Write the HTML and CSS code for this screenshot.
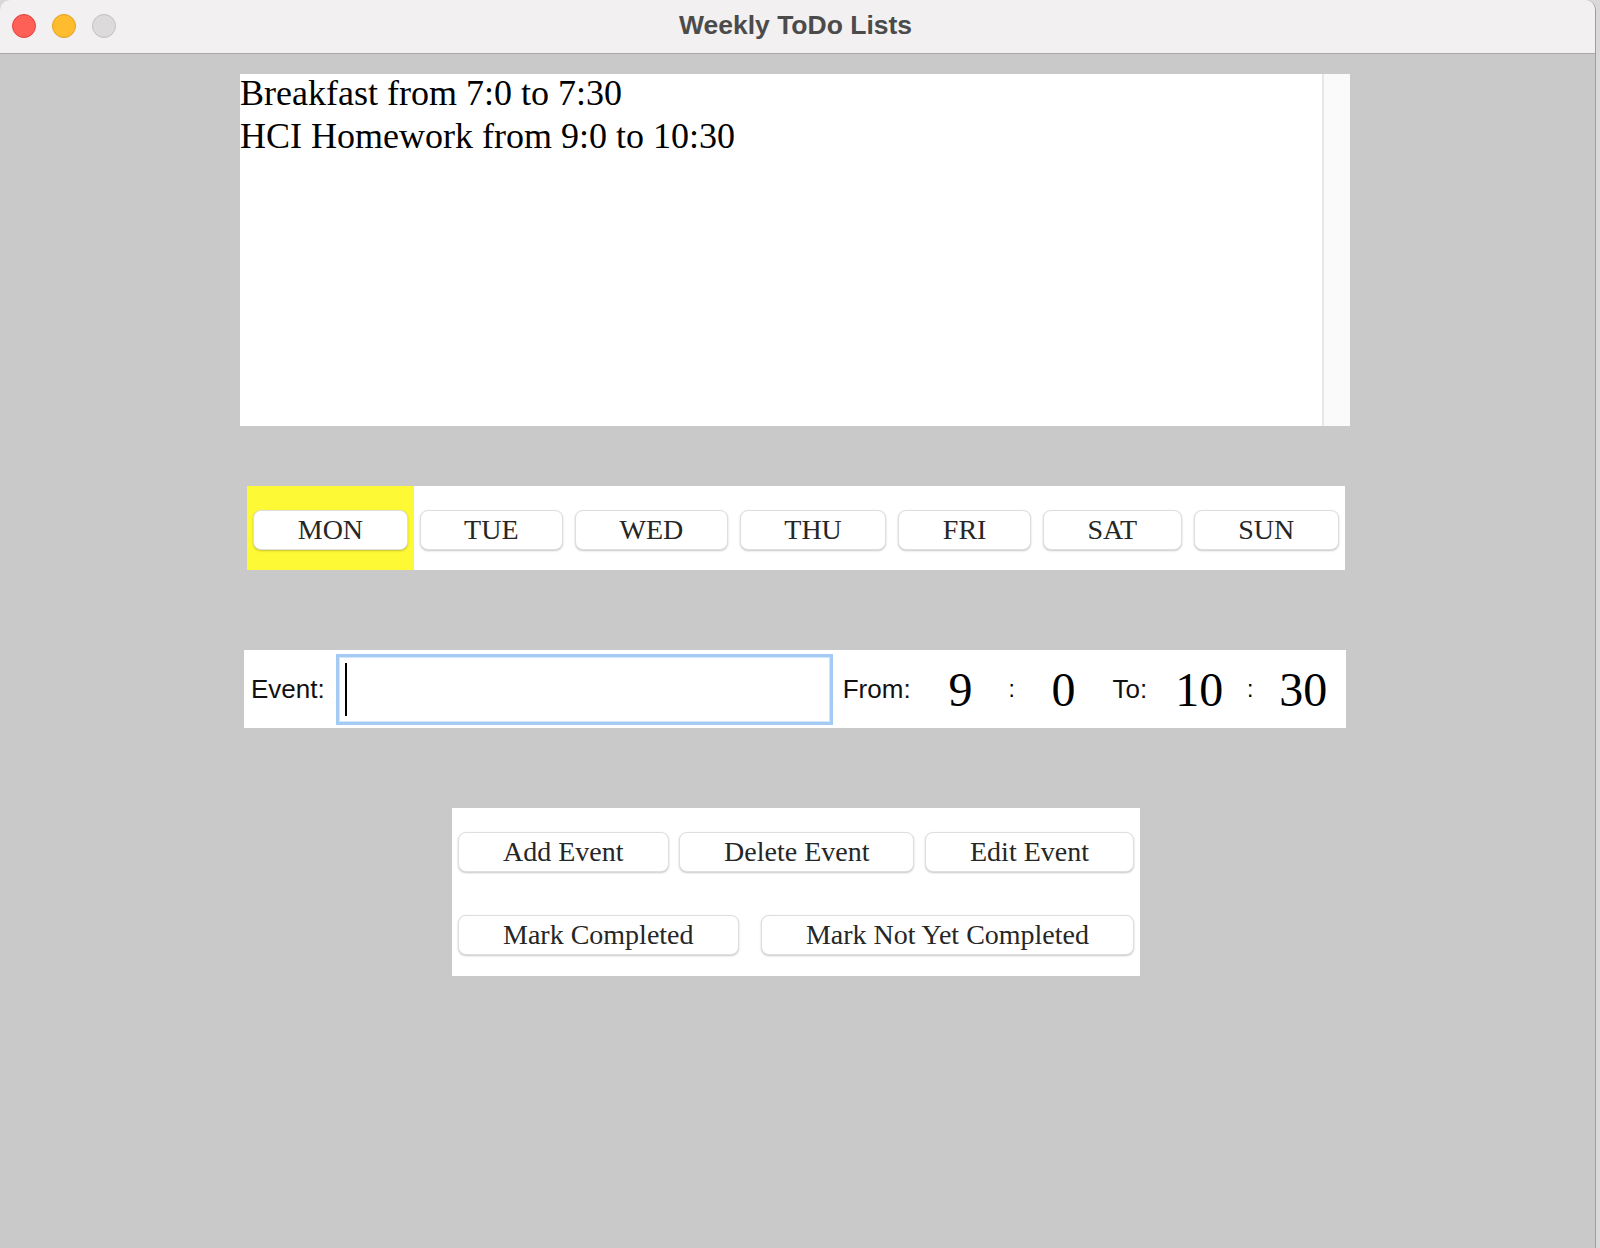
FILE: index.html
```html
<!DOCTYPE html>
<html>
<head>
<meta charset="utf-8">
<title>Weekly ToDo Lists</title>
<link rel="stylesheet" href="styles.css">
</head>
<body>
<div class="window">
  <div class="titlebar">
    <div class="lights">
      <span class="light red"></span>
      <span class="light yellow"></span>
      <span class="light grey"></span>
    </div>
    <div class="title">Weekly ToDo Lists</div>
  </div>
  <div class="content">
    <div class="listbox">
      <div class="list-text">
        <div class="list-line">Breakfast from 7:0 to 7:30</div>
        <div class="list-line">HCI Homework from 9:0 to 10:30</div>
      </div>
      <div class="vscroll"></div>
    </div>

    <div class="days">
      <div class="day-cell active"><div class="btn">MON</div></div>
      <div class="day-cell"><div class="btn">TUE</div></div>
      <div class="day-cell"><div class="btn">WED</div></div>
      <div class="day-cell"><div class="btn">THU</div></div>
      <div class="day-cell"><div class="btn">FRI</div></div>
      <div class="day-cell"><div class="btn">SAT</div></div>
      <div class="day-cell"><div class="btn">SUN</div></div>
    </div>

    <div class="event-row">
      <span class="label event-label">Event:</span>
      <div class="event-input"><span class="caret"></span></div>
      <span class="label from-label">From:</span>
      <span class="num num-h1">9</span>
      <span class="colon">:</span>
      <span class="num num-m1">0</span>
      <span class="label to-label">To:</span>
      <span class="num num-h2">10</span>
      <span class="colon colon2">:</span>
      <span class="num num-m2">30</span>
    </div>

    <div class="actions">
      <div class="act-row act-row1">
        <div class="btn">Add Event</div>
        <div class="btn">Delete Event</div>
        <div class="btn">Edit Event</div>
      </div>
      <div class="act-row act-row2">
        <div class="btn">Mark Completed</div>
        <div class="btn">Mark Not Yet Completed</div>
      </div>
    </div>
  </div>
</div>
</body>
</html>
```
FILE: styles.css
```css
html, body {
  margin: 0;
  padding: 0;
}
body {
  width: 1600px;
  height: 1248px;
  background: #d9d9d9;
  overflow: hidden;
  font-family: "Liberation Serif", "Times New Roman", serif;
}
.window {
  width: 1595px;
  height: 1248px;
  border-right: 1px solid #9d9d9d;
  border-top-left-radius: 10px;
  border-top-right-radius: 10px;
  overflow: hidden;
  display: flex;
  flex-direction: column;
  background: #c9c9c9;
}
.titlebar {
  height: 53px;
  border-bottom: 1px solid #a8a8a8;
  background: #f2f0f1;
  position: relative;
  display: flex;
  align-items: center;
  justify-content: center;
  flex-shrink: 0;
  padding-right: 4px;
}
.lights {
  position: absolute;
  left: 12px;
  top: 14px;
  display: flex;
  gap: 16px;
}
.light {
  width: 22px;
  height: 22px;
  border-radius: 50%;
  border: 1px solid transparent;
}
.red { background: #fe5f57; border-color: #e0443e; }
.yellow { background: #febc2e; border-color: #dea123; }
.grey { background: #dcdadb; border-color: #c2c0c1; }
.title {
  font-family: "Liberation Sans", Arial, sans-serif;
  font-weight: bold;
  font-size: 26.5px;
  color: #4b4b4b;
  margin-top: -2px;
}
.content {
  flex: 1;
  display: flex;
  flex-direction: column;
  align-items: center;
  padding-right: 3px;
}
.listbox {
  margin-top: 20px;
  margin-right: 2px;
  width: 1110px;
  height: 352px;
  background: #ffffff;
  display: flex;
}
.list-text {
  flex: 1;
  font-size: 36px;
  line-height: 43px;
  color: #000;
  margin-top: -2px;
}
.vscroll {
  width: 26px;
  border-left: 2px solid #e7e7e7;
  background: #fafafa;
}
.days {
  margin-top: 60px;
  background: #ffffff;
  display: flex;
  height: 84px;
}
.day-cell {
  padding: 24px 6px 0 6px;
}
.day-cell.active {
  background: #fef935;
}
.btn {
  height: 40px;
  box-sizing: border-box;
  padding: 0 44px;
  background: #ffffff;
  border: 1px solid #dedede;
  border-radius: 8px;
  box-shadow: 0 1px 2px rgba(0, 0, 0, 0.22);
  font-family: "Liberation Serif", "Times New Roman", serif;
  font-size: 28px;
  color: #262626;
  display: flex;
  align-items: center;
  justify-content: center;
  white-space: nowrap;
}
.days .btn {
  padding: 0 43.5px;
}
.event-row {
  margin-top: 80px;
  margin-right: 2px;
  width: 1102px;
  height: 78px;
  background: #ffffff;
  display: flex;
  align-items: center;
}
.label {
  font-family: "Liberation Sans", Arial, sans-serif;
  font-size: 26px;
  color: #111;
}
.event-label { margin-left: 7px; }
.event-input {
  margin-left: 11px;
  width: 497px;
  height: 71px;
  box-sizing: border-box;
  border: 3px solid #a3cbf4;
  box-shadow: inset 0 0 0 1px #d3e5f8;
  background: #fff;
  display: flex;
  align-items: center;
  padding-left: 6px;
}
.caret {
  width: 2px;
  height: 53px;
  background: #000;
}
.from-label { margin-left: 10px; }
.num {
  font-family: "Liberation Serif", "Times New Roman", serif;
  font-size: 48px;
  color: #000;
  text-align: center;
  width: 80px;
}
.num-h1 { margin-left: 10px; }
.num-m1 { width: 82px; }
.colon {
  font-family: "Liberation Sans", Arial, sans-serif;
  font-size: 23px;
  width: 22px;
  text-align: center;
  color: #000;
}
.to-label { margin-left: 8px; }
.num-h2 { margin-left: 12px; }
.colon2 { margin-left: 0; }
.num-m2 { margin-left: 2px; }
.actions {
  margin-top: 80px;
  width: 688px;
  box-sizing: border-box;
  padding: 24px 6px 21px 6px;
  background: #ffffff;
  display: flex;
  flex-direction: column;
  gap: 43px;
}
.act-row {
  display: flex;
  justify-content: space-between;
}
```
